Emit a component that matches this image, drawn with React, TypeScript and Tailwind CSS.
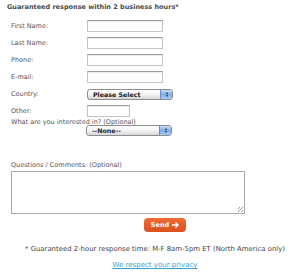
import type { ReactNode } from "react";

const font = "font-['DejaVu_Sans',Verdana,sans-serif]";

function Row({ label, children }: { label: string; children: ReactNode }) {
  return (
    <div className="mt-[5px] flex h-[12px] items-center">
      <div className="w-[76px] text-[length:6.5px] leading-[12px] text-[color:#555555]">{label}</div>
      {children}
    </div>
  );
}

function TextBox({ w = "w-[76px]" }: { w?: string }) {
  return (
    <div
      className={`h-[12px] ${w} border border-[#c4c4c4] border-t-[#9a9a9a] bg-white shadow-[inset_0_1px_1px_rgba(0,0,0,0.08)]`}
    />
  );
}

function Select({ text }: { text: string }) {
  return (
    <div className="flex h-[11px] w-[86px] overflow-hidden rounded-[3px] border border-[#8e8e8e] bg-gradient-to-b from-white via-[#f2f2f2] to-[#d6d6d6]">
      <div className="flex-1 pl-[5px] text-[length:6.3px] font-bold leading-[9px] text-[color:#222222]">{text}</div>
      <div className="flex w-[12px] flex-col items-center justify-center gap-[1px] border-l border-[#6d8fc5] bg-gradient-to-b from-[#c6dcf7] via-[#7eaee8] to-[#a8cdf5]">
        <div className="h-0 w-0 border-x-[1.5px] border-b-[2px] border-x-transparent border-b-[#1b2a44]" />
        <div className="h-0 w-0 border-x-[1.5px] border-t-[2px] border-x-transparent border-t-[#1b2a44]" />
      </div>
    </div>
  );
}

export default function App() {
  return (
    <div className={`h-[278px] w-[300px] bg-white leading-[8px] ${font}`}>
      <div className="pl-[7px] pt-[3px] text-[length:6.5px] font-bold leading-[8px] text-[color:#4a4a4a]">
        Guaranteed response within 2 business hours*
      </div>

      <div className="pl-[11px] pt-[4px]">
        <Row label="First Name:">
          <TextBox />
        </Row>
        <Row label="Last Name:">
          <TextBox />
        </Row>
        <Row label="Phone:">
          <TextBox />
        </Row>
        <Row label="E-mail:">
          <TextBox />
        </Row>
        <Row label="Country:">
          <Select text="Please Select" />
        </Row>
        <Row label="Other:">
          <TextBox w="w-[43px]" />
        </Row>

        <div className="mt-[1px] h-[7px] text-[length:6.5px] leading-[8px] text-[color:#555555]">
          What are you interested in? (Optional)
        </div>
        <div className="pl-[75px]">
          <Select text="--None--" />
        </div>

        <div className="mt-[25px] h-[8px] text-[length:6.5px] leading-[8px] text-[color:#555555]">
          Questions / Comments: (Optional)
        </div>
        <div className="relative mt-[2px] h-[43px] w-[234px] border border-[#a8a8a8] bg-white">
          <div className="absolute bottom-[1px] right-[1px] h-[5px] w-[5px] bg-[repeating-linear-gradient(135deg,transparent_0,transparent_1px,#999_1px,#999_2px)]" />
        </div>
      </div>

      <div className="mt-[4px] flex justify-center pl-[30px]">
        <button className="flex h-[14px] w-[42px] items-center justify-center gap-[3px] rounded-[4px] bg-gradient-to-b from-[#ef6a35] to-[#d9511f] text-[length:6.5px] font-bold leading-[8px] text-white">
          Send
          <svg width="7" height="6" viewBox="0 0 7 6" fill="none" stroke="white" strokeWidth="1.4">
            <path d="M0 3h6M3.5 0.5L6 3L3.5 5.5" />
          </svg>
        </button>
      </div>

      <div className="mt-[13px] pl-[10px] text-center text-[length:6.9px] leading-[8px] text-[color:#444444]">
        * Guaranteed 2-hour response time: M-F 8am-5pm ET (North America only)
      </div>
      <div className="mt-[8px] pl-[10px] text-center text-[length:7px] leading-[8px] text-[color:#3aa2cf] underline">
        We respect your privacy
      </div>
    </div>
  );
}
